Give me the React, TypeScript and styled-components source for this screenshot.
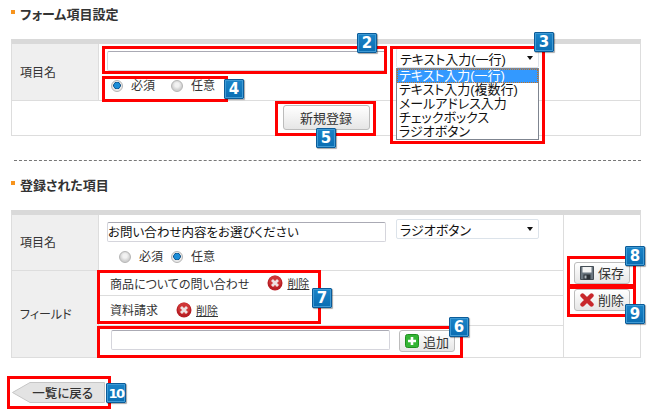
import React from "react";
import styled, { createGlobalStyle } from "styled-components";

const GlobalStyle = createGlobalStyle`
  html, body {
    margin: 0;
    padding: 0;
    background: #fff;
  }
  body {
    font-family: "Liberation Sans", "Noto Sans CJK JP", sans-serif;
    font-size: 12px;
    font-feature-settings: "palt";
    color: #333;
  }
`;

const Page = styled.div`
  position: relative;
  width: 657px;
  height: 415px;
  overflow: hidden;
  padding: 6px 16px 0 11px;
  box-sizing: border-box;
`;

const Heading = styled.h2`
  display: flex;
  align-items: center;
  gap: 5px;
  height: 16px;
  margin: 0 0 17px;
  padding-top: 1px;
  box-sizing: border-box;
  font-size: 13px;
  line-height: 15px;
  font-weight: bold;
  color: #333;
  &::before {
    content: "";
    width: 4px;
    height: 4px;
    margin-top: -5px;
    background: #f7941d;
  }
`;

const Panel = styled.div`
  border: 1px solid #ddd;
  border-top: 5px solid #d9d9d9;
  width: 630px;
  box-sizing: border-box;
`;

const EditGrid = styled.div`
  display: grid;
  grid-template-columns: 1fr 77px;
`;

const Row = styled.div<{ $height?: number }>`
  display: grid;
  grid-template-columns: 87px 1fr;
  border-bottom: 1px solid #ddd;
  ${({ $height }) => ($height ? `height: ${$height}px;` : "")}
  box-sizing: content-box;
  &:last-child {
    border-bottom: 0;
  }
`;

const Label = styled.div`
  display: flex;
  align-items: center;
  padding: 0 0 2px 8px;
  background: #efefef;
  border-right: 1px solid #ddd;
  color: #333;
`;

const Cell = styled.div`
  padding: 7px 0 0 8px;
`;

const TopLine = styled.div`
  display: flex;
  align-items: flex-start;
  gap: 10px;
`;

const TextInput = styled.input`
  display: block;
  width: 279px;
  height: 20px;
  padding: 0 0 2px;
  box-sizing: border-box;
  border: 1px solid #d5d5dc;
  border-top-color: #aaaab4;
  border-radius: 2px;
  background: #fff;
  font: 12.5px "Liberation Sans", "Noto Sans CJK JP", sans-serif;
  font-feature-settings: "palt";
  color: #111;
  outline: none;
`;

const Select = styled.div`
  position: relative;
  display: flex;
  align-items: center;
  justify-content: space-between;
  width: 143px;
  height: 20px;
  margin-top: -3px;
  padding: 0 5px 0 3px;
  box-sizing: border-box;
  border: 1px solid #dce3ea;
  border-radius: 2px;
  font-size: 13px;
  color: #111;
  &::after {
    content: "";
    border: 3.5px solid transparent;
    border-top: 4px solid #111;
    border-bottom: 0;
  }
`;

const OptionList = styled.ul`
  position: absolute;
  left: -1px;
  top: 19px;
  width: 143px;
  height: 72px;
  margin: 0;
  padding: 0;
  box-sizing: border-box;
  list-style: none;
  background: #fff;
  border: 1px solid #7f8590;
  z-index: 1;
`;

const Option = styled.li<{ $active?: boolean }>`
  height: 14px;
  padding-left: 2px;
  font-size: 13px;
  line-height: 14px;
  white-space: nowrap;
  color: ${({ $active }) => ($active ? "#fff" : "#111")};
  background: ${({ $active }) => ($active ? "#3399ff" : "transparent")};
  outline: ${({ $active }) => ($active ? "1px dotted #c8701a" : "none")};
  outline-offset: -1px;
`;

const RadioGroup = styled.div<{ $indent: number; $gap: number }>`
  display: flex;
  align-items: center;
  gap: ${({ $gap }) => $gap}px;
  height: 20px;
  margin: 5px 0 0 ${({ $indent }) => $indent}px;
`;

const RadioItem = styled.span`
  display: flex;
  align-items: center;
  gap: 8px;
  color: #333;
  line-height: 16px;
  padding-bottom: 1px;
`;

const RadioDot = styled.i<{ $on?: boolean }>`
  display: block;
  width: 12px;
  height: 12px;
  box-sizing: border-box;
  border-radius: 50%;
  border: 1px solid #b5b5b5;
  background: ${({ $on }) =>
    $on
      ? "radial-gradient(circle at 50% 45%, #1c8ed8 0 2.5px, #0b4f86 3.5px, #e8e8e8 4px)"
      : "radial-gradient(circle at 50% 40%, #f2f2f2 0 2px, #d0d0d0 5px)"};
`;

const ActionCell = styled.div`
  grid-column: 1 / -1;
  display: flex;
  justify-content: center;
  padding-top: 4px;
`;

const Divider = styled.hr`
  width: 627px;
  margin: 24px 0 16px 3px;
  border: 0;
  border-top: 1px dashed #777;
  height: 0;
`;

const Button = styled.button<{ $width: number; $height: number }>`
  display: inline-flex;
  align-items: center;
  justify-content: center;
  gap: 4px;
  width: ${({ $width }) => $width}px;
  height: ${({ $height }) => $height}px;
  padding: 0;
  border: 1px solid #bcbcbc;
  border-radius: 3px;
  background: linear-gradient(#fff, #e6e6e6);
  font: 13px "Liberation Sans", "Noto Sans CJK JP", sans-serif;
  color: #333;
`;

const FieldLine = styled.div<{ $height: number; $lift?: number }>`
  display: flex;
  align-items: center;
  height: ${({ $height }) => $height}px;
  padding: 0 0 ${({ $lift }) => $lift || 0}px 11px;
  box-sizing: border-box;
  border-bottom: 1px solid #ddd;
  color: #333;
`;

const FieldName = styled.span`
  margin-right: 18px;
`;

const RemoveLink = styled.a`
  margin-left: 4px;
  font-size: 11px;
  color: #333;
  text-decoration: underline;
`;

const AddLine = styled.div`
  display: flex;
  align-items: flex-start;
  gap: 9px;
  height: 31px;
  padding: 4px 0 0 12px;
  box-sizing: border-box;
`;

const SideCell = styled.div`
  display: flex;
  flex-direction: column;
  align-items: center;
  justify-content: center;
  gap: 5px;
  border-left: 1px solid #ddd;
`;

const BackButton = styled.a`
  position: relative;
  display: flex;
  align-items: center;
  justify-content: flex-end;
  width: 93px;
  height: 21px;
  margin: 24px 0 0 1px;
  padding-right: 12px;
  box-sizing: border-box;
  font-size: 12.5px;
  font-weight: 500;
  color: #333;
  svg {
    position: absolute;
    left: 0;
    top: 0;
  }
  span {
    position: relative;
  }
`;

const RedBox = styled.div<{ $x: number; $y: number; $w: number; $h: number }>`
  position: absolute;
  left: ${({ $x }) => $x}px;
  top: ${({ $y }) => $y}px;
  width: ${({ $w }) => $w}px;
  height: ${({ $h }) => $h}px;
  box-sizing: border-box;
  border: 3px solid #f00;
  z-index: 2;
`;

const Badge = styled.div<{ $x: number; $y: number; $tight?: boolean }>`
  position: absolute;
  left: ${({ $x }) => $x}px;
  top: ${({ $y }) => $y}px;
  width: 20px;
  height: 20px;
  box-sizing: border-box;
  display: flex;
  align-items: center;
  justify-content: center;
  background: linear-gradient(#1b84c8, #0a6db2);
  border: 1px solid #0b5c99;
  box-shadow: inset 0 0 0 1px #3f9ad4, 1px 1px 1px rgba(0, 0, 0, 0.35);
  border-radius: 1px;
  font-family: "DejaVu Sans", sans-serif;
  font-weight: bold;
  font-size: ${({ $tight }) => ($tight ? "13px" : "15px")};
  color: #fff;
  letter-spacing: ${({ $tight }) => ($tight ? "-1.5px" : "0")};
  z-index: 3;
`;

const DeleteCircle = () => (
  <svg width="16" height="16" viewBox="0 0 16 16">
    <circle cx="8" cy="8" r="7.5" fill="#b81f25" />
    <circle cx="8" cy="6.5" r="6" fill="#d9403f" opacity="0.7" />
    <path d="M5 5l6 6M11 5l-6 6" stroke="#eee2e2" strokeWidth="2.8" />
  </svg>
);

const PlusIcon = () => (
  <svg width="14" height="14" viewBox="0 0 14 14">
    <rect x="0.5" y="0.5" width="13" height="13" rx="2" fill="#34b534" stroke="#1f8f1f" />
    <path d="M7 3v8M3 7h8" stroke="#fff" strokeWidth="2.6" />
  </svg>
);

const SaveIcon = () => (
  <svg width="14" height="14" viewBox="0 0 14 14">
    <path d="M0.5 0.5h13v13H0.5z" fill="#6b7680" stroke="#454d55" strokeWidth="1" />
    <rect x="2.5" y="1" width="9" height="5.5" fill="#f4f4f4" />
    <rect x="3.5" y="8.5" width="7" height="5" fill="#2b3137" />
    <rect x="4.5" y="9.5" width="2" height="3" fill="#aab2ba" />
  </svg>
);

const CrossIcon = () => (
  <svg width="14" height="14" viewBox="0 0 14 14">
    <path d="M2.5 2.5l9 9M11.5 2.5l-9 9" stroke="#c8272b" strokeWidth="4.4" strokeLinecap="round" />
  </svg>
);

const Radios = ({ indent, gap, required }: { indent: number; gap: number; required: boolean }) => (
  <RadioGroup $indent={indent} $gap={gap}>
    <RadioItem>
      <RadioDot $on={required} />
      必須
    </RadioItem>
    <RadioItem>
      <RadioDot $on={!required} />
      任意
    </RadioItem>
  </RadioGroup>
);

const options = ["テキスト入力(一行)", "テキスト入力(複数行)", "メールアドレス入力", "チェックボックス", "ラジオボタン"];

const boxes = [
  { x: 102, y: 46, w: 285, h: 28 },
  { x: 390, y: 46, w: 155, h: 98 },
  { x: 102, y: 76, w: 126, h: 26 },
  { x: 275, y: 101, w: 101, h: 35 },
  { x: 97, y: 326, w: 366, h: 32 },
  { x: 97, y: 270, w: 224, h: 54 },
  { x: 567, y: 256, w: 69, h: 31 },
  { x: 567, y: 286, w: 69, h: 31 },
  { x: 7, y: 376, w: 104, h: 33 },
];

const badges = [
  { n: 2, x: 357, y: 33 },
  { n: 3, x: 534, y: 32 },
  { n: 4, x: 224, y: 79 },
  { n: 5, x: 316, y: 128 },
  { n: 6, x: 449, y: 317 },
  { n: 7, x: 312, y: 288 },
  { n: 8, x: 625, y: 246 },
  { n: 9, x: 625, y: 304 },
  { n: 10, x: 106, y: 383 },
];

export default function App() {
  return (
    <Page>
      <GlobalStyle />
      <Heading>フォーム項目設定</Heading>
      <Panel>
        <Row $height={56}>
          <Label>項目名</Label>
          <Cell>
            <TopLine>
              <TextInput readOnly />
              <Select>
                テキスト入力(一行)
                <OptionList>
                  {options.map((o, i) => (
                    <Option key={o} $active={i === 0}>
                      {o}
                    </Option>
                  ))}
                </OptionList>
              </Select>
            </TopLine>
            <Radios indent={4} gap={16} required />
          </Cell>
        </Row>
        <Row $height={34}>
          <ActionCell>
            <Button $width={87} $height={25}>新規登録</Button>
          </ActionCell>
        </Row>
      </Panel>

      <Divider />

      <Heading>登録された項目</Heading>
      <Panel>
        <EditGrid>
          <div>
            <Row $height={55}>
              <Label>項目名</Label>
              <Cell>
                <TopLine>
                  <TextInput readOnly defaultValue="お問い合わせ内容をお選びください" />
                  <Select>ラジオボタン</Select>
                </TopLine>
                <Radios indent={12} gap={8} required={false} />
              </Cell>
            </Row>
            <Row>
              <Label>フィールド</Label>
              <div>
                <FieldLine $height={25}>
                  <FieldName>商品についての問い合わせ</FieldName>
                  <DeleteCircle />
                  <RemoveLink>削除</RemoveLink>
                </FieldLine>
                <FieldLine $height={30} $lift={2}>
                  <FieldName>資料請求</FieldName>
                  <DeleteCircle />
                  <RemoveLink>削除</RemoveLink>
                </FieldLine>
                <AddLine>
                  <TextInput readOnly />
                  <Button $width={56} $height={22}>
                    <PlusIcon />
                    追加
                  </Button>
                </AddLine>
              </div>
            </Row>
          </div>
          <SideCell>
            <Button $width={56} $height={22}>
              <SaveIcon />
              保存
            </Button>
            <Button $width={56} $height={22}>
              <CrossIcon />
              削除
            </Button>
          </SideCell>
        </EditGrid>
      </Panel>

      <BackButton>
        <svg width="93" height="21" viewBox="0 0 93 21">
          <path d="M0.5 10.5L18 0.5H92.5V20.5H18Z" fill="#e3e3e3" stroke="#c6c6c6" />
        </svg>
        <span>一覧に戻る</span>
      </BackButton>

      {boxes.map((b) => (
        <RedBox key={`${b.x}-${b.y}`} $x={b.x} $y={b.y} $w={b.w} $h={b.h} />
      ))}
      {badges.map((b) => (
        <Badge key={b.n} $x={b.x} $y={b.y} $tight={b.n === 10}>
          {b.n}
        </Badge>
      ))}
    </Page>
  );
}
